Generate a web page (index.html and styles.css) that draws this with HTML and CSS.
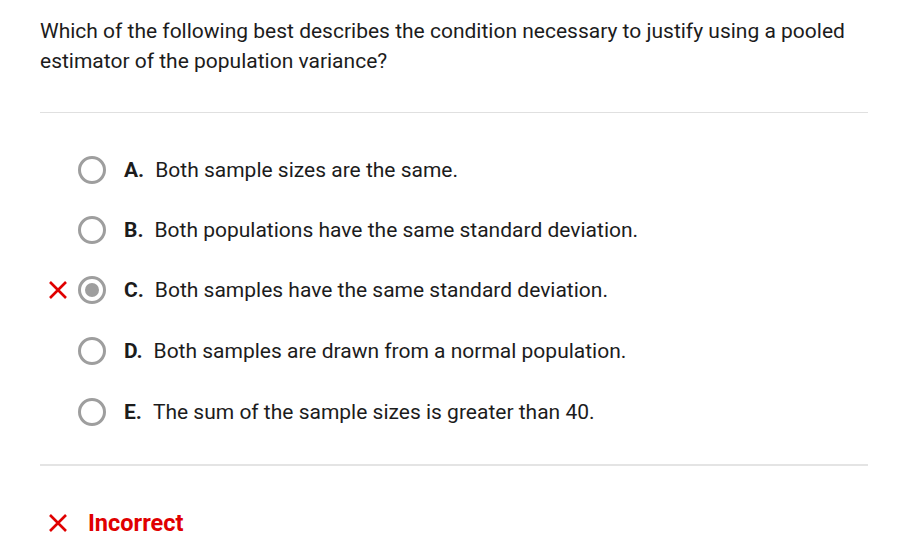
FILE: index.html
```html
<!DOCTYPE html>
<html>
<head>
<meta charset="utf-8">
<link rel="stylesheet" href="styles.css">
</head>
<body>
<div class="page">
  <p class="question">Which of the following best describes the condition necessary to justify using a pooled estimator of the population variance?</p>
  <hr class="rule rule-top">
  <ul class="options">
    <li class="option">
      <span class="mark"></span>
      <span class="radio"></span>
      <span class="label"><b class="letter">A.</b>Both sample sizes are the same.</span>
    </li>
    <li class="option">
      <span class="mark"></span>
      <span class="radio"></span>
      <span class="label"><b class="letter">B.</b>Both populations have the same standard deviation.</span>
    </li>
    <li class="option">
      <span class="mark">
        <svg viewBox="0 0 20 20" width="20" height="20"><path d="M2 2 L18 18 M18 2 L2 18" stroke="#e00000" stroke-width="2.6" fill="none"/></svg>
      </span>
      <span class="radio checked"></span>
      <span class="label"><b class="letter">C.</b>Both samples have the same standard deviation.</span>
    </li>
    <li class="option">
      <span class="mark"></span>
      <span class="radio"></span>
      <span class="label"><b class="letter">D.</b>Both samples are drawn from a normal population.</span>
    </li>
    <li class="option">
      <span class="mark"></span>
      <span class="radio"></span>
      <span class="label"><b class="letter">E.</b>The sum of the sample sizes is greater than 40.</span>
    </li>
  </ul>
  <hr class="rule rule-bottom">
  <div class="result">
    <svg class="result-icon" viewBox="0 0 20 20" width="20" height="20"><path d="M2 2 L18 18 M18 2 L2 18" stroke="#e00000" stroke-width="2.6" fill="none"/></svg>
    <span class="result-text">Incorrect</span>
  </div>
</div>
</body>
</html>
```

FILE: styles.css
```css
html, body {
  margin: 0;
  padding: 0;
  background: #ffffff;
}
body {
  font-family: Roboto, "Liberation Sans", Arial, sans-serif;
  color: #1c1c1c;
}
.page {
  padding: 16px 0 0 40px;
  width: 828px;
}
.question {
  margin: 0;
  font-size: 21px;
  line-height: 30px;
}
.rule {
  border: 0;
  height: 1px;
  background: #e0e0e0;
  margin: 0;
}
.rule-top {
  margin-top: 36px;
}
.options {
  list-style: none;
  margin: 27px 0 0 0;
  padding: 0;
}
.option {
  height: 60px;
  display: flex;
  align-items: center;
  padding-left: 8px;
  font-size: 21px;
}
.option:nth-child(n+4) {
  height: 61px;
}
.mark {
  width: 20px;
  height: 20px;
  display: flex;
  margin-right: 10px;
}
.radio {
  width: 28px;
  height: 28px;
  box-sizing: border-box;
  border: 3px solid #9e9e9e;
  border-radius: 50%;
  margin-right: 18px;
  display: flex;
  align-items: center;
  justify-content: center;
}
.radio.checked::after {
  content: "";
  width: 14px;
  height: 14px;
  border-radius: 50%;
  background: #9e9e9e;
}
.letter {
  font-weight: 700;
  margin-right: 11px;
}
.rule-bottom {
  margin-top: 22px;
  height: 2px;
  background: #e4e4e4;
}
.result {
  margin-top: 42px;
  display: flex;
  align-items: center;
  padding-left: 8px;
  height: 30px;
}
.result-icon {
  margin-right: 20px;
}
.result-text {
  color: #e00000;
  font-weight: 700;
  font-size: 23.5px;
}
```
